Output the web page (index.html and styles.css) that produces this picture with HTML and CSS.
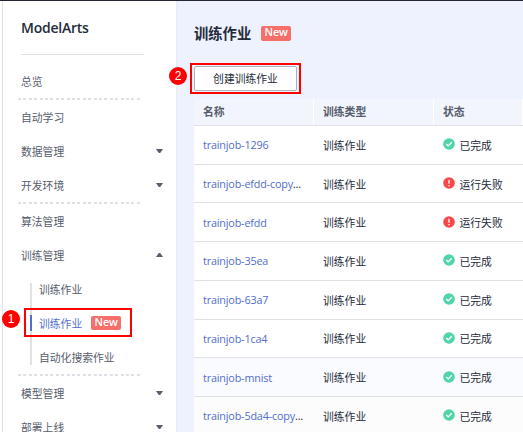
FILE: index.html
```html
<!DOCTYPE html>
<html lang="zh-CN">
<head>
<meta charset="utf-8">
<title>ModelArts</title>
<link rel="stylesheet" href="styles.css">
</head>
<body>
<div class="app">
  <nav class="sidebar">
    <h1 class="brand">ModelArts</h1>
    <div class="menu">
      <div class="item">总览</div>
      <div class="dash"></div>
      <div class="item">自动学习</div>
      <div class="item">数据管理<svg class="caret" viewBox="0 0 7 4"><path d="M0 0H7L4.2 4H2.8Z"/></svg></div>
      <div class="item">开发环境<svg class="caret" viewBox="0 0 7 4"><path d="M0 0H7L4.2 4H2.8Z"/></svg></div>
      <div class="dash"></div>
      <div class="item">算法管理</div>
      <div class="item">训练管理<svg class="caret" viewBox="0 0 7 4"><path d="M0 4H7L4.2 0H2.8Z"/></svg></div>
      <div class="submenu">
        <div class="item">训练作业</div>
        <div class="item active">训练作业<span class="tag">New</span></div>
        <div class="item">自动化搜索作业</div>
      </div>
      <div class="dash"></div>
      <div class="item">模型管理<svg class="caret" viewBox="0 0 7 4"><path d="M0 0H7L4.2 4H2.8Z"/></svg></div>
      <div class="item">部署上线<svg class="caret" viewBox="0 0 7 4"><path d="M0 0H7L4.2 4H2.8Z"/></svg></div>
    </div>
  </nav>
  <main class="content">
    <h2 class="title">训练作业<span class="tag">New</span></h2>
    <button class="create">创建训练作业</button>
    <div class="table">
      <div class="row head"><span>名称</span><span>训练类型</span><span>状态</span></div>
      <div class="row"><a>trainjob-1296</a><span>训练作业</span><span class="status"><svg viewBox="0 0 12 12"><circle class="ok" cx="6" cy="6" r="5.8"/><path d="M3.3 6L5.2 7.9L8.8 4.3"/></svg>已完成</span></div>
      <div class="row"><a>trainjob-efdd-copy<i>...</i></a><span>训练作业</span><span class="status"><svg viewBox="0 0 12 12"><circle class="bad" cx="6" cy="6" r="5.8"/><path d="M6 2.8V6.8M6 8V9.3"/></svg>运行失败</span></div>
      <div class="row"><a>trainjob-efdd</a><span>训练作业</span><span class="status"><svg viewBox="0 0 12 12"><circle class="bad" cx="6" cy="6" r="5.8"/><path d="M6 2.8V6.8M6 8V9.3"/></svg>运行失败</span></div>
      <div class="row"><a>trainjob-35ea</a><span>训练作业</span><span class="status"><svg viewBox="0 0 12 12"><circle class="ok" cx="6" cy="6" r="5.8"/><path d="M3.3 6L5.2 7.9L8.8 4.3"/></svg>已完成</span></div>
      <div class="row"><a>trainjob-63a7</a><span>训练作业</span><span class="status"><svg viewBox="0 0 12 12"><circle class="ok" cx="6" cy="6" r="5.8"/><path d="M3.3 6L5.2 7.9L8.8 4.3"/></svg>已完成</span></div>
      <div class="row"><a>trainjob-1ca4</a><span>训练作业</span><span class="status"><svg viewBox="0 0 12 12"><circle class="ok" cx="6" cy="6" r="5.8"/><path d="M3.3 6L5.2 7.9L8.8 4.3"/></svg>已完成</span></div>
      <div class="row tint"><a>trainjob-mnist</a><span>训练作业</span><span class="status"><svg viewBox="0 0 12 12"><circle class="ok" cx="6" cy="6" r="5.8"/><path d="M3.3 6L5.2 7.9L8.8 4.3"/></svg>已完成</span></div>
      <div class="row tint"><a>trainjob-5da4-copy<i>...</i></a><span>训练作业</span><span class="status"><svg viewBox="0 0 12 12"><circle class="ok" cx="6" cy="6" r="5.8"/><path d="M3.3 6L5.2 7.9L8.8 4.3"/></svg>已完成</span></div>
    </div>
  </main>
  <div class="frame frame-menu"></div>
  <div class="step step-menu">1</div>
  <div class="frame frame-create"></div>
  <div class="step step-create">2</div>
</div>
</body>
</html>
```
FILE: styles.css
```css
* { box-sizing: border-box; }

body {
  margin: 0;
  overflow: hidden;
  font: 10.8px "Open Sans", "Noto Sans CJK SC", sans-serif;
  color: #252b3a;
}

.app {
  position: relative;
  display: flex;
  width: 523px;
  height: 432px;
  overflow: hidden;
  border-top: 1px solid #252533;
}

.sidebar {
  flex: none;
  width: 176px;
  padding: 0 0 0 18px;
  background: linear-gradient(#dfe1ea, #dfe1ea) 2px 0 / 1px 100% no-repeat #fff;
}

.brand {
  width: 123px;
  height: 54px;
  margin: 0 0 9px 3px;
  border-bottom: 1px solid #dfe1e6;
  font-size: 14px;
  font-weight: 600;
  line-height: 54px;
  letter-spacing: -0.25px;
}

.item {
  display: flex;
  align-items: center;
  height: 34px;
  padding: 0 13px 1px 3px;
  color: #575d6c;
  white-space: nowrap;
}

.caret {
  width: 7px;
  height: 4px;
  margin-left: auto;
  fill: #575d6c;
}

.dash {
  width: 122px;
  height: 2px;
  background: repeating-linear-gradient(90deg, #dfe1e6 0 3px, transparent 3px 5.4px);
}

.submenu {
  margin-left: 12px;
  background: linear-gradient(#dfe1e6, #dfe1e6) 0 11px / 2px 82px no-repeat;
}

.submenu .item { padding-left: 9px; }

.submenu .active {
  background: linear-gradient(#526ecc, #526ecc) 0 9px / 2px 16px no-repeat;
  color: #526ecc;
}

.tag {
  width: 30px;
  height: 14px;
  margin: 1px 0 0 9px;
  border-radius: 2px;
  background: #f66f6a;
  color: #fff;
  font-size: 10.8px;
  font-weight: 600;
  line-height: 12px;
  text-align: center;
}

.content {
  flex: 1;
  padding-left: 18px;
  background: linear-gradient(90deg, #e6ebfa, #eef2fe 3px);
}

.title {
  display: flex;
  align-items: center;
  height: 65px;
  margin: 0;
  padding-bottom: 2px;
  font-size: 14.3px;
  font-weight: 700;
}

.title .tag {
  height: 15px;
  margin: 2px 0 0 10px;
}

.create {
  display: block;
  width: 103px;
  height: 25px;
  margin: 0 0 8px;
  padding: 0 0 2px;
  border: 1px solid #adb0b8;
  border-radius: 2px;
  background: #fff;
  color: #252b3a;
  font: inherit;
}

.row {
  display: grid;
  grid-template-columns: 120px 120px 1fr;
  align-items: center;
  height: 38.71px;
  border-bottom: 1px solid #dfe1e6;
  background: #fff;
}

.row > * { padding-left: 9px; }

.row a {
  color: #526ecc;
  letter-spacing: -0.17px;
}

.row i {
  color: #252b3a;
  font-style: normal;
}

.head {
  height: 27px;
  background: #f2f5fc;
  color: #575d6c;
  font-weight: 700;
}

.head span {
  height: 26px;
  line-height: 26px;
  border-right: 1px solid #fff;
}

.tint { background: #fafbff; }

.tint + .tint { background: #fcfcfd; }

.status {
  display: flex;
  align-items: center;
  gap: 4.5px;
}

.status svg {
  width: 12px;
  height: 12px;
  margin-top: -1px;
  fill: none;
  stroke: #fff;
  stroke-width: 1.3;
}

.status circle { stroke: none; }

.ok { fill: #50d4ab; }

.bad { fill: #fa474a; }

.frame {
  position: absolute;
  border: 2px solid #f00;
}

.frame-menu {
  left: 24px;
  top: 307px;
  width: 108px;
  height: 29px;
}

.frame-create {
  left: 190px;
  top: 62px;
  width: 111px;
  height: 31px;
}

.step {
  position: absolute;
  width: 18px;
  height: 18px;
  border-radius: 50%;
  background: #f00;
  color: #fff;
  font: 12px/18px "Liberation Sans", sans-serif;
  text-align: center;
}

.step-menu { left: 2px; top: 309px; }

.step-create { left: 169px; top: 66px; }
```
